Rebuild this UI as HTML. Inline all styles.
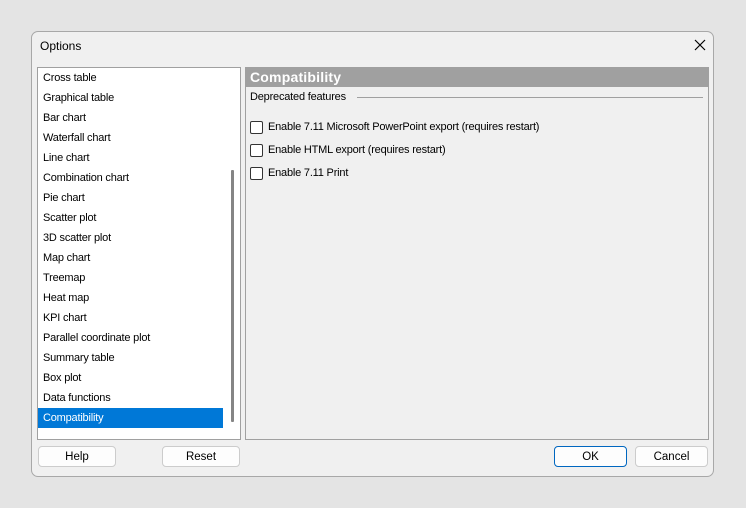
<!DOCTYPE html>
<html><head><style>
body{margin:0;width:746px;height:508px;background:#e4e4e4;font-family:"Liberation Sans",sans-serif;font-size:11px;letter-spacing:-0.2px;color:#000;position:relative;overflow:hidden}
.dlg{position:absolute;left:31px;top:31px;width:683px;height:446px;background:#f0f0f0;border:1px solid #a8a8a8;border-radius:7px;box-sizing:border-box}
.title{position:absolute;left:40px;top:39px;font-size:12px;letter-spacing:0}
.x{position:absolute;left:693px;top:38px}
.list{position:absolute;left:37px;top:67px;width:204px;height:373px;background:#fff;border:1px solid #a0a0a0;box-sizing:border-box}
.it{position:absolute;left:5px;height:20px;line-height:20px}
.sel{position:absolute;left:0;top:340px;width:185px;height:20px;background:#0078d7}
.sb{position:absolute;left:193px;top:102px;width:3px;height:252px;background:#858585;border-radius:1px}
.panel{position:absolute;left:245px;top:67px;width:464px;height:373px;border:1px solid #a0a0a0;box-sizing:border-box}
.hdr{position:absolute;left:0;top:0;right:0;height:19px;background:#a0a0a0;color:#fff;font-weight:bold;font-size:14px;letter-spacing:0.2px;line-height:19px;padding-left:4px}
.cb{position:absolute;left:4px;width:11px;height:11px;border:1px solid #333;border-radius:2px;background:#fff}
.lb{position:absolute;left:22px}
.btn{position:absolute;height:21px;border:1px solid #ccc;border-radius:4px;background:#fdfdfd;text-align:center;line-height:20px;box-sizing:border-box;font-size:11.5px;letter-spacing:0}
</style></head><body>
<div class="dlg"></div>
<div class="title">Options</div>
<svg class="x" width="14" height="14"><path d="M2 2L12 12M12 2L2 12" stroke="#000" stroke-width="1.2"/></svg>
<div class="list">
<div class="sel"></div>
<div class="sb"></div>
<div class="it" style="top:0">Cross table</div>
<div class="it" style="top:20px">Graphical table</div>
<div class="it" style="top:40px">Bar chart</div>
<div class="it" style="top:60px">Waterfall chart</div>
<div class="it" style="top:80px">Line chart</div>
<div class="it" style="top:100px">Combination chart</div>
<div class="it" style="top:120px">Pie chart</div>
<div class="it" style="top:140px">Scatter plot</div>
<div class="it" style="top:160px">3D scatter plot</div>
<div class="it" style="top:180px">Map chart</div>
<div class="it" style="top:200px">Treemap</div>
<div class="it" style="top:220px">Heat map</div>
<div class="it" style="top:240px">KPI chart</div>
<div class="it" style="top:260px">Parallel coordinate plot</div>
<div class="it" style="top:280px">Summary table</div>
<div class="it" style="top:300px">Box plot</div>
<div class="it" style="top:320px">Data functions</div>
<div class="it" style="top:340px;color:#fff">Compatibility</div>
</div>
<div class="panel">
<div class="hdr">Compatibility</div>
<div style="position:absolute;left:4px;top:23px">Deprecated features</div>
<div style="position:absolute;left:111px;top:29px;width:346px;height:1px;background:#a0a0a0"></div>
<div class="cb" style="top:53px"></div><div class="lb" style="top:53px">Enable 7.11 Microsoft PowerPoint export (requires restart)</div>
<div class="cb" style="top:76px"></div><div class="lb" style="top:76px">Enable HTML export (requires restart)</div>
<div class="cb" style="top:99px"></div><div class="lb" style="top:99px">Enable 7.11 Print</div>
</div>
<div class="btn" style="left:38px;top:446px;width:78px">Help</div>
<div class="btn" style="left:162px;top:446px;width:78px">Reset</div>
<div class="btn" style="left:554px;top:446px;width:73px;border-color:#0067c0">OK</div>
<div class="btn" style="left:635px;top:446px;width:73px">Cancel</div>
</body></html>
